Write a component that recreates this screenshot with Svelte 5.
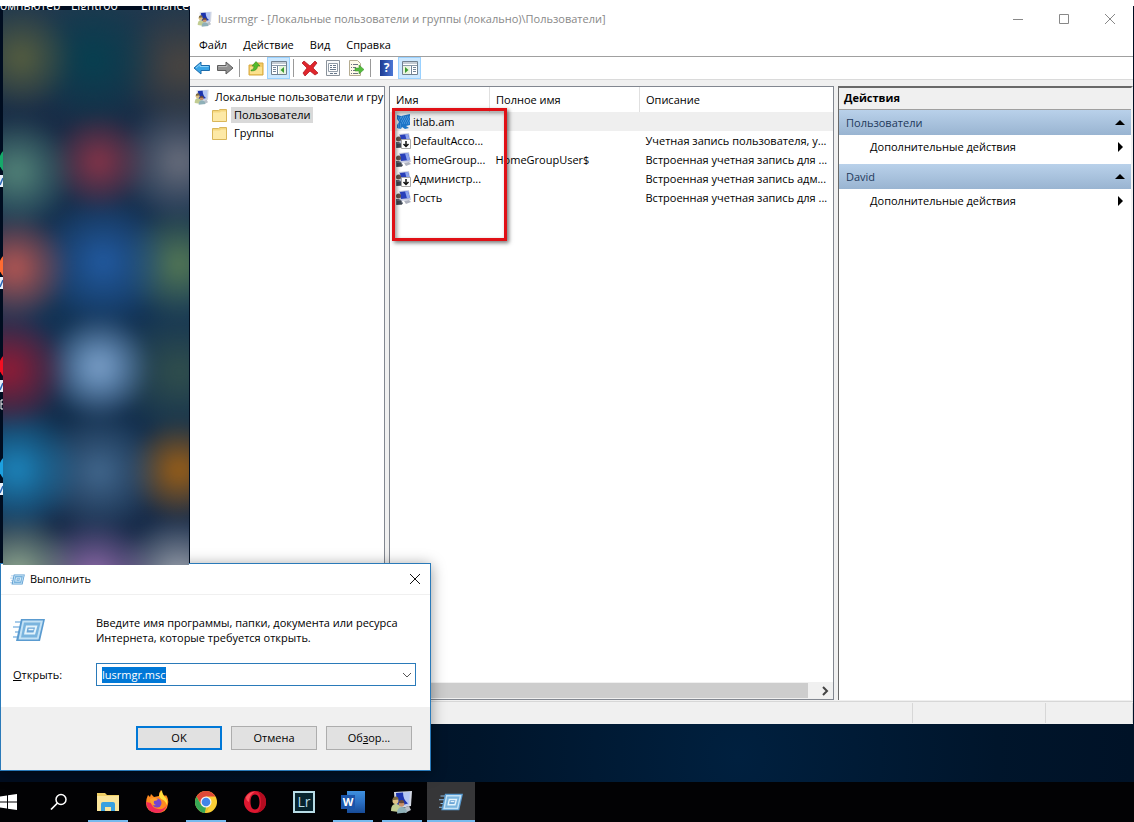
<script lang="ts">
	import { onMount } from 'svelte';

	interface User { name: string; full: string; about: string; state: string; }

	const menus = ['Файл', 'Действие', 'Вид', 'Справка'];

	const users: User[] = [
		{ name: 'itlab.am', full: '', about: '', state: 'selected' },
		{ name: 'DefaultAcco...', full: '', about: 'Учетная запись пользователя, у...', state: 'disabled' },
		{ name: 'HomeGroup...', full: 'HomeGroupUser$', about: 'Встроенная учетная запись для ...', state: '' },
		{ name: 'Администр...', full: '', about: 'Встроенная учетная запись адм...', state: 'disabled' },
		{ name: 'Гость', full: '', about: 'Встроенная учетная запись для ...', state: '' }
	];

	const sections = ['Пользователи', 'David'];

	const apps = [
		{ id: 'explorer', label: 'Проводник', open: true },
		{ id: 'firefox', label: 'Firefox', open: false },
		{ id: 'chrome', label: 'Chrome', open: true },
		{ id: 'opera', label: 'Opera', open: false },
		{ id: 'lightroom', label: 'Lightroom', open: false },
		{ id: 'word', label: 'Word', open: true },
		{ id: 'users', label: 'lusrmgr', open: true },
		{ id: 'run', label: 'Выполнить', open: true }
	];

	let command = $state('lusrmgr.msc');
	let inputEl: HTMLInputElement;

	onMount(() => {
		inputEl.focus();
		inputEl.select();
	});
</script>

{#snippet usersIcon(size: number)}
	<svg viewBox="0 0 24 24" width={size} height={size} aria-hidden="true">
		<path d="M4 2l18-1-1 15-16 3z" fill="#d3d8e4" />
		<path d="M6 3l14-1-1 13-12 2z" fill="#b4c6f4" />
		<path d="M6 3l7-.5q0 7 5 11l-11 3z" fill="#1c33ae" />
		<path d="M13 18l6-2 2 4-6 3z" fill="#b9bfc8" />
		<circle cx="5.500" cy="11" r="3" fill="#dcc083" />
		<path d="M2.500 10q0-3 3-3.500 3 0 3 3l-4 .5z" fill="#7d6a40" />
		<path d="M1 21q0-7 4.500-7t5 4l-2 4z" fill="#c1cc92" />
		<circle cx="11.500" cy="14" r="2.800" fill="#c99168" />
		<path d="M8.700 13q0-3 3-3 2.500 0 2.500 3l-3 .3z" fill="#66483a" />
		<path d="M7 23.500q0-6 4.500-6.500 5 0 5.500 5.500z" fill="#8fb0b8" />
	</svg>
{/snippet}

{#snippet userIcon(state: string)}
	<svg viewBox="0 0 15 16" width="15" height="16" aria-hidden="true">
		{#if state === 'selected'}
			<path d="M1 1l4 1 9-2v11l-4 1 3 2-4 1-3-2-1 2-4-1v-3l2-3-2-3z" fill="#1c75c8" />
			<path d="M5 3h9M6 5h8M5 7h9M6 9h8M2 4h3M3 6h2M2 10h3M2 12h3M2 14h3" stroke="#65aae8" stroke-dasharray="1 1" />
		{:else}
			<path d="M3 1l10-1 2 10-11 1z" fill="#c8cce0" />
			<path d="M4 2l8-1 2 7-9 1z" fill="#2940ba" />
			<path d="M9 1.300l3-.3 2 7-3 .4z" fill="#8da4ed" />
			<path d="M8 11l5-1 2 2-5 2z" fill="#aeb2bf" />
			<circle cx="2.500" cy="6" r="2.500" fill="#62564c" />
			<path d="M0 15V9h3q3 1 4 5z" fill="#5d6674" />
			<path d="M1 12h4M1 14h5" stroke="#252a32" />
			{#if state === 'disabled'}
				<path d="M5.500 6.500h9v9h-9z" fill="#fff" stroke="#aaa" />
				<path d="M10 8v5M7.500 11l2.500 2.500 2.500-2.500" fill="none" stroke="#111" stroke-width="1.500" />
			{/if}
		{/if}
	</svg>
{/snippet}

{#snippet runIcon(width: number, height: number)}
	<svg viewBox="0 0 32 24" {width} {height} aria-hidden="true">
		<path d="M2 4h7M0 9h7M2 14h4M0 19h4" stroke="#8cbce4" stroke-width="1.500" />
		<path d="M8 1h24l-5 22H3z" fill="#5a9bd0" />
		<path d="M9.500 2.500h20.500l-4.500 19H5.500z" fill="#c4e2f5" />
		<path d="M11 4.500h16.500l-3.500 15H8z" fill="#7ab4de" />
		<path d="M13 7.500h11.500l-2.500 9H11z" fill="#e3f3fb" />
		<path d="M14.500 9.500h7.500l-1.500 5h-7z" fill="#6ba5d6" />
		<path d="M15.500 11.500h5" stroke="#e9f6fd" stroke-width="1.500" />
	</svg>
{/snippet}

{#snippet folderIcon()}
	<svg viewBox="0 0 15 13" width="15" height="13" aria-hidden="true">
		<path d="M.5 1.500h6l1.500-1h6.500v12H.5z" fill="#f5d77e" stroke="#d9b65a" />
		<path d="M1 3.500h7l1-1h5V12H1z" fill="#fde9a6" />
	</svg>
{/snippet}

{#snippet appIcon(id: string)}
	{#if id === 'explorer'}
		<svg viewBox="0 0 22 20" width="22" height="20" aria-hidden="true">
			<path d="M0 1h8l2 2h12v16H0z" fill="#f0cf65" />
			<path d="M0 4h22v15H0z" fill="#fbe59b" />
			<path d="M4 19v-7q0-2 2-2h10q2 0 2 2v7h-4v-4H8v4z" fill="#39a1df" />
		</svg>
	{:else if id === 'firefox'}
		<svg viewBox="0 0 24 24" width="24" height="24" aria-hidden="true">
			<path d="M3 5l2 2 1-3 3 3 5-1q0-4 2-6 1 4 4 6l1-1q3 4 2 9-1 9-11 9Q1 22 1 13q0-4 2-8z" fill="#ff8a20" />
			<path d="M1 12q1 11 11 11 8-1 10-8-3 5-9 4-6-1-7-6z" fill="#f22b58" />
			<path d="M14 6q1-4 3-6 0 5 4 8 2 3 1 7-2-5-6-6z" fill="#ffdf3c" />
			<circle cx="12" cy="13" r="4.500" fill="#7644cf" />
			<path d="M5 9q4-2 8 0-1 2-4 2-1 3 2 4-6 1-6-6z" fill="#ffa12e" />
		</svg>
	{:else if id === 'chrome'}
		<svg viewBox="0 0 24 24" width="24" height="24" aria-hidden="true">
			<circle cx="12" cy="12" r="11" fill="#fbcf35" />
			<path d="M2.500 6.500A11 11 0 0 1 21.500 6.500H12L7.500 15z" fill="#df4938" />
			<path d="M2.500 6.500l5 9L12 17l-1 6A11 11 0 0 1 2.500 6.500z" fill="#36a756" />
			<path d="M16.500 15l-4.500 8-1-.1 2-6z" fill="#e8bd2c" />
			<circle cx="12" cy="12" r="5.500" fill="#f4f4f4" />
			<circle cx="12" cy="12" r="4.300" fill="#4285e8" />
		</svg>
	{:else if id === 'opera'}
		<svg viewBox="0 0 24 24" width="24" height="24" aria-hidden="true">
			<path fill-rule="evenodd" d="M12 1a11 11 0 1 0 0 22 11 11 0 0 0 0-22zm0 3.500c3 0 4.500 3 4.500 7.500s-1.500 7.500-4.500 7.500S7.500 16.500 7.500 12 9 4.500 12 4.500z" fill="#dd1730" />
			<path fill-rule="evenodd" d="M14 1.300Q23 3 23 12T14 22.700q4-3 4-10.700T14 1.300z" fill="#b30c20" />
			<path d="M3 7Q6 2 12 1.500 6 5 6 12q-3-1-3-5z" fill="#fa4d57" />
		</svg>
	{:else if id === 'lightroom'}
		<span class="lr" aria-hidden="true">Lr</span>
	{:else if id === 'word'}
		<span class="word" aria-hidden="true"><span class="word-tile">W</span></span>
	{:else if id === 'users'}
		{@render usersIcon(24)}
	{:else}
		{@render runIcon(24, 18)}
	{/if}
{/snippet}

<div class="desktop">
	<div class="top-strip"></div>

	<div class="shortcuts">
		<span>омпьютер</span>
		<span>Lightroo</span>
		<span>Enhancer</span>
	</div>

	<svg class="edge" viewBox="0 0 4 555" width="4" height="555" aria-hidden="true">
		<circle cx="13" cy="151" r="14" fill="#16a96a" />
		<circle cx="13" cy="256" r="14" fill="#ff6b32" />
		<circle cx="13" cy="356" r="14" fill="#f20f22" />
		<circle cx="13" cy="458" r="14" fill="#1ca0e0" />
		<path d="M0 165h4v12H0zM0 267h4v12H0zM0 370h4v12H0zM0 473h4v12H0z" fill="#e8f1fa" />
		<path d="M0 175l3-7M0 277l3-7M0 380l3-7M0 483l3-7" stroke="#2b67b8" stroke-width="1.500" />
		<path d="M3 390H1v9h2M1 394h2" fill="none" stroke="#fff" />
	</svg>
	<div class="blurred"></div>

	<main class="window">
		<header class="title-bar">
			{@render usersIcon(16)}
			<h1>lusrmgr - [Локальные пользователи и группы (локально)\Пользователи]</h1>
			<button class="win-btn" aria-label="Свернуть">
				<svg viewBox="0 0 12 12" width="12" height="12"><path d="M1 6.500h10" stroke="#888" /></svg>
			</button>
			<button class="win-btn" aria-label="Развернуть">
				<svg viewBox="0 0 12 12" width="12" height="12"><path d="M1.500 1.500h9v9h-9z" fill="none" stroke="#888" /></svg>
			</button>
			<button class="win-btn" aria-label="Закрыть">
				<svg viewBox="0 0 12 12" width="12" height="12"><path d="M1 1l10 10M11 1L1 11" stroke="#888" /></svg>
			</button>
		</header>

		<nav class="menu">
			{#each menus as m}
				<button>{m}</button>
			{/each}
		</nav>

		<div class="toolbar">
			<button class="tb" aria-label="Назад">
				<svg viewBox="0 0 18 16" width="18" height="16"><path d="M1 8l7-6v3.500h8.500v5H8V14z" fill="#3ba5e6" stroke="#1b6bab" /><path d="M3 8l4-3.500v2h8.500" fill="none" stroke="#8bd2fa" /></svg>
			</button>
			<button class="tb" aria-label="Вперед">
				<svg viewBox="0 0 18 16" width="18" height="16"><path d="M17 8l-7-6v3.500H1.500v5H10V14z" fill="#929292" stroke="#5d5d5d" /><path d="M2.500 6.500H11v-2" fill="none" stroke="#bbb" /></svg>
			</button>
			<span class="sep"></span>
			<button class="tb" aria-label="Вверх">
				<svg viewBox="0 0 16 16" width="16" height="16"><path d="M1 5h5l1-2h8v12H1z" fill="#f2cb67" stroke="#d6a83d" /><path d="M2 7h12v7H2z" fill="#fbe18e" /><path d="M3 10q3 0 3-4H4l4-4.500L12 6H9.500q0 5-6.500 5z" fill="#54bb2c" stroke="#33851c" stroke-width=".5" /></svg>
			</button>
			<button class="tb on" aria-label="Дерево консоли">
				<svg viewBox="0 0 16 14" width="16" height="14"><path d="M.5.5h15v13H.5z" fill="#fff" stroke="#71808f" /><path d="M1 2h14M1 4.500h14" stroke="#8b9aaa" /><path d="M6.500 5v8M2 6.500h3M2 8.500h3M2 10.500h3" stroke="#74869a" /><path d="M8 5h7v8H8z" fill="#e9f4df" /><path d="M13 6v6L9.500 9z" fill="#3b9c30" /></svg>
			</button>
			<span class="sep"></span>
			<button class="tb" aria-label="Удалить">
				<svg viewBox="0 0 16 16" width="16" height="16"><path d="M2 1l6 5 5-5 2 2-4 5 5 5-3 2-5-4-5 5-2-3 4-5-5-5z" fill="#e0262c" stroke="#a90f18" stroke-width=".7" /></svg>
			</button>
			<button class="tb" aria-label="Свойства">
				<svg viewBox="0 0 16 16" width="16" height="16"><path d="M1.500.5h13v15h-13z" fill="#f9fafb" stroke="#8a929b" /><path d="M3.500 3.500h9v8h-9z" fill="#fff" stroke="#919ca8" /><path d="M5 5.500h2M8 5.500h3M5 7.500h2M8 7.500h3M5 9.500h6M5 13.500h3M9 13.500h3" stroke="#68788b" /></svg>
			</button>
			<button class="tb" aria-label="Экспортировать список">
				<svg viewBox="0 0 16 16" width="16" height="16"><path d="M1.500.5h8l3 3v12h-11z" fill="#fffbe9" stroke="#b5ac91" /><path d="M3 4.500h1M5 4.500h5M3 7.500h1M5 7.500h3M3 10.500h1M5 10.500h2M3 13.500h1M5 13.500h5" stroke="#6e7381" /><path d="M7 8h4V5l5 4.500-5 4.500v-3H7z" fill="#55bd3e" stroke="#398d29" stroke-width=".5" /></svg>
			</button>
			<span class="sep"></span>
			<button class="tb" aria-label="Справка">
				<span class="help">?</span>
			</button>
			<button class="tb on" aria-label="Область действий">
				<svg viewBox="0 0 16 14" width="16" height="14"><path d="M.5.5h15v13H.5z" fill="#fff" stroke="#71808f" /><path d="M1 2h14M1 4.500h14" stroke="#8b9aaa" /><path d="M9.500 5v8M11 6.500h3M11 8.500h3M11 10.500h3" stroke="#74869a" /><path d="M1 5h7v8H1z" fill="#e9f4df" /><path d="M3 6v6l3.500-3z" fill="#3b9c30" /></svg>
			</button>
		</div>

		<div class="panes">
			<section class="tree">
				<div class="node">{@render usersIcon(16)}<span>Локальные пользователи и гру</span></div>
				<div class="node child">{@render folderIcon()}<span class="picked">Пользователи</span></div>
				<div class="node child">{@render folderIcon()}<span>Группы</span></div>
			</section>

			<section class="list">
				<table>
					<thead>
						<tr><th class="c-name">Имя</th><th class="c-full">Полное имя</th><th>Описание</th></tr>
					</thead>
					<tbody>
						{#each users as u}
							<tr class:sel={u.state === 'selected'}>
								<td class="name"><div>{@render userIcon(u.state)}<span>{u.name}</span></div></td>
								<td>{u.full}</td>
								<td>{u.about}</td>
							</tr>
						{/each}
					</tbody>
				</table>
				<div class="mark"></div>
				<div class="hscroll">
					<div class="thumb"></div>
					<button aria-label="Прокрутить вправо">
						<svg viewBox="0 0 8 10" width="8" height="10"><path d="M2 1l4 4-4 4" fill="none" stroke="#444" stroke-width="2" /></svg>
					</button>
				</div>
			</section>

			<aside class="actions">
				<h2>Действия</h2>
				{#each sections as s}
					<button class="group">{s}<svg viewBox="0 0 10 5" width="10" height="5"><path d="M0 5l5-5 5 5z" /></svg></button>
					<button class="more">Дополнительные действия<svg viewBox="0 0 5 10" width="5" height="10"><path d="M0 0l5 5-5 5z" /></svg></button>
				{/each}
			</aside>
		</div>

		<footer class="status"><span></span><span></span><span></span></footer>
	</main>

	<form class="dialog" onsubmit={(e) => e.preventDefault()}>
		<header>
			{@render runIcon(15, 11)}
			<h2>Выполнить</h2>
			<button type="button" class="close" aria-label="Закрыть">
				<svg viewBox="0 0 12 12" width="12" height="12"><path d="M1 1l10 10M11 1L1 11" stroke="#111" /></svg>
			</button>
		</header>
		<div class="body">
			{@render runIcon(32, 24)}
			<p>Введите имя программы, папки, документа или ресурса Интернета, которые требуется открыть.</p>
			<label for="cmd"><u>О</u>ткрыть:</label>
			<div class="combo">
				<input id="cmd" type="text" bind:this={inputEl} bind:value={command} autocomplete="off" />
				<button type="button" aria-label="Показать список">
					<svg viewBox="0 0 10 6" width="10" height="6"><path d="M1 1l4 4 4-4" fill="none" stroke="#555" /></svg>
				</button>
			</div>
		</div>
		<div class="buttons">
			<button type="submit" class="ok">OK</button>
			<button type="button">Отмена</button>
			<button type="button">Об<u>з</u>ор...</button>
		</div>
	</form>

	<nav class="taskbar">
		<button class="start" aria-label="Пуск">
			<svg viewBox="0 0 17 16" width="17" height="16"><path d="M0 2.500l7-1v6H0zM8 1.300L17 0v7.500H8zM0 8.500h7v6l-7-1zM8 8.500h9V16l-9-1.300z" fill="#fff" /></svg>
		</button>
		<button aria-label="Поиск">
			<svg viewBox="0 0 18 18" width="18" height="18"><circle cx="11" cy="6.500" r="5" fill="none" stroke="#fff" stroke-width="1.500" /><path d="M7.500 10L1 16.500" stroke="#fff" stroke-width="1.700" /></svg>
		</button>
		{#each apps as app}
			<button class:open={app.open} class:active={app.id === 'run'} aria-label={app.label}>
				{@render appIcon(app.id)}
			</button>
		{/each}
	</nav>
</div>

<style>
	:global(body) { margin: 0; }

	.desktop {
		position: relative;
		display: flex;
		flex-direction: column;
		min-height: 100vh;
		overflow: hidden;
		background: radial-gradient(ellipse at 65% 92%, #00203f 0, #00152b 25%, #000d20 60%);
		color: #000;
		font-family: "Open Sans", "Noto Sans", sans-serif;
		font-size: 11px;
		line-height: 16px;
	}

	button, input {
		font: inherit;
		color: inherit;
		box-sizing: border-box;
	}

	button {
		padding: 0;
		border: 0;
		background: none;
	}

	h1, h2, p { margin: 0; font: inherit; }
	svg { display: block; flex: none; }

	.top-strip {
		height: 6px;
		background: #fff;
		z-index: 2;
	}

	.shortcuts {
		display: grid;
		grid-template-columns: 71px 70px 50px;
		height: 4px;
		width: 190px;
		overflow: hidden;
		color: #fff;
		font-size: 12px;
	}

	.shortcuts span { margin-top: -8px; }

	.edge {
		position: absolute;
		left: 0;
		top: 10px;
	}

	/* Smeared desktop icons */
	.blurred {
		position: absolute;
		left: 3px;
		top: 10px;
		z-index: 4;
		width: 186px;
		height: 555px;
		overflow: hidden;
		background: linear-gradient(#20384e, #172b46 22%, #123457 50%, #122d4b 78%, #192a48);
	}

	/* Bleeds 20px past the box so that the blur has no dark rim */
	.blurred::before {
		content: "";
		display: block;
		height: 595px;
		margin: -20px;
		filter: blur(8px);
		background:
			radial-gradient(circle at 38px 68px, #58603f 0, transparent 54px),
			radial-gradient(circle at 110px 70px, #064050 0, transparent 66px),
			radial-gradient(circle at 198px 76px, #4c4640 0, transparent 64px),
			radial-gradient(circle at 34px 182px, #55877a 0, transparent 58px),
			radial-gradient(circle at 116px 172px, #8c3448 0, transparent 50px),
			radial-gradient(circle at 196px 172px, #6c707e 0, transparent 62px),
			radial-gradient(circle at 32px 278px, #bd5852 0, transparent 56px),
			radial-gradient(circle at 120px 272px, #225ba2 0, transparent 66px),
			radial-gradient(circle at 196px 274px, #567b55 0, transparent 58px),
			radial-gradient(circle at 26px 380px, #981a34 0, transparent 60px),
			radial-gradient(circle at 116px 377px, #7ea2cb 0, #5f85ae 18px, transparent 54px),
			radial-gradient(circle at 196px 382px, #32504c 0, transparent 66px),
			radial-gradient(circle at 34px 480px, #1d88c0 0, transparent 64px),
			radial-gradient(circle at 116px 482px, #43698f 0, transparent 62px),
			radial-gradient(circle at 196px 480px, #a36214 0, transparent 52px),
			radial-gradient(circle at 35px 585px, #99b295 0, transparent 62px),
			radial-gradient(circle at 112px 590px, #9c72b4 0, transparent 62px),
			radial-gradient(circle at 196px 590px, #a9afb8 0, transparent 64px);
	}

	/* Console window */
	.window {
		position: absolute;
		top: 6px;
		right: 1px;
		bottom: 98px;
		left: 190px;
		display: flex;
		flex-direction: column;
		background: #f0f0f0;
	}

	.title-bar {
		display: flex;
		align-items: center;
		height: 26px;
		padding-left: 7px;
		background: #fff;
		color: #888;
	}

	.title-bar h1 {
		flex: 1;
		margin-left: 5px;
		white-space: nowrap;
	}

	.win-btn {
		display: grid;
		place-items: center;
		width: 46px;
		height: 26px;
	}

	.menu {
		display: flex;
		gap: 16px;
		height: 23px;
		padding: 1px 0 0 9px;
		background: #fff;
		border-bottom: 1px solid #a0a0a0;
	}

	.toolbar {
		display: flex;
		align-items: center;
		height: 22px;
		background: #fff;
		border-bottom: 1px solid #dadada;
	}

	.tb {
		display: grid;
		place-items: center;
		width: 23px;
		height: 22px;
	}

	.tb.on {
		background: #cce8ff;
		box-shadow: inset 0 0 0 1px #99d1ff;
	}

	.sep {
		width: 1px;
		height: 18px;
		margin: 0 4px 0 3px;
		background: #999;
	}

	.help {
		width: 13px;
		background: linear-gradient(90deg, #1c3a91, #4b77d5);
		color: #fff;
		font-size: 12px;
		font-weight: 700;
		text-align: center;
	}

	.panes {
		flex: 1;
		display: grid;
		grid-template-columns: 195px minmax(0, 1fr) 295px;
		column-gap: 4px;
		min-height: 0;
		padding-top: 6px;
		padding-bottom: 1px;
	}

	.tree {
		overflow: hidden;
		background: #fff;
		border: solid #828790;
		border-width: 1px 1px 1px 0;
		padding-top: 1px;
	}

	.node {
		display: flex;
		align-items: center;
		gap: 5px;
		height: 18px;
		padding-left: 4px;
		white-space: nowrap;
	}

	.node.child { gap: 4px; padding-left: 22px; }
	.node.child span { padding: 0 3px; }
	.node .picked { background: #d9d9d9; }

	.list {
		position: relative;
		display: flex;
		flex-direction: column;
		justify-content: space-between;
		background: #fff;
		border: 1px solid #828790;
	}

	table {
		width: 100%;
		table-layout: fixed;
		border-collapse: collapse;
	}

	th, td {
		height: 19px;
		padding: 0 0 0 6px;
		font-weight: 400;
		text-align: left;
		white-space: nowrap;
	}

	th {
		height: 25px;
		border-right: 1px solid #e0e0e0;
	}

	th:last-child { border-right: 0; }
	.c-name { width: 93px; }
	.c-full { width: 143px; }
	.name div { display: flex; align-items: center; gap: 2px; }
	.sel { background: #efefef; }

	.mark {
		position: absolute;
		top: 21px;
		left: 2px;
		width: 109px;
		height: 127px;
		border: 3px solid #e01016;
		box-shadow: 2px 2px 4px #0008, inset 2px 2px 4px #0006;
	}

	.hscroll {
		display: flex;
		height: 17px;
		background: #f0f0f0;
	}

	.thumb {
		flex: 1;
		margin: 1px 8px 1px 0;
		background: #cdcdcd;
	}

	.hscroll button {
		display: grid;
		place-items: center;
		width: 17px;
	}

	.actions {
		background: #fff;
		border-top: 2px solid #696969;
		border-left: 1px solid #696969;
		border-right: 2px solid #f0f0f0;
	}

	.actions h2 {
		height: 21px;
		padding-left: 5px;
		background: #f0f0f0;
		border-bottom: 1px solid #a0a0a0;
		font-weight: 700;
		line-height: 20px;
	}

	.group, .more {
		display: flex;
		align-items: center;
		justify-content: space-between;
		width: 100%;
		padding: 0 8px 0 7px;
	}

	.group {
		height: 25px;
		padding-right: 6px;
		background: linear-gradient(#b9d1ea, #99b4d1);
		color: #1e395b;
	}

	.group svg { fill: #000; }
	.more { height: 24px; margin-bottom: 5px; padding-left: 31px; }

	.status {
		display: grid;
		grid-template-columns: 1fr 133px 87px;
		height: 22px;
		border-top: 1px solid #d7d7d7;
	}

	.status span {
		margin: 1px 0;
		border-right: 1px solid #d7d7d7;
	}

	/* Run dialog */
	.dialog {
		position: absolute;
		left: 0;
		bottom: 51px;
		z-index: 3;
		width: 429px;
		background: #fff;
		border: 1px solid #2a7ab9;
		box-shadow: 0 2px 14px #0006;
	}

	.dialog header {
		display: flex;
		align-items: center;
		height: 30px;
		padding-left: 9px;
		border-bottom: 1px solid #f0f0f0;
	}

	.dialog header h2 {
		flex: 1;
		margin-left: 5px;
	}

	.close {
		display: grid;
		place-items: center;
		width: 30px;
		height: 30px;
	}

	.body {
		display: grid;
		grid-template-columns: 83px 1fr;
		align-items: center;
		row-gap: 18px;
		padding: 20px 14px 21px 12px;
	}

	.body p { line-height: 15px; }

	.combo {
		display: flex;
		height: 23px;
		box-sizing: border-box;
		border: 1px solid #2a7ab9;
	}

	.combo input {
		flex: 1;
		min-width: 0;
		padding: 0 5px;
		border: 0;
		outline: 0;
	}

	.combo input::selection {
		background: #0078d7;
		color: #fff;
	}

	.combo button {
		display: grid;
		place-items: center;
		width: 17px;
	}

	.buttons {
		display: flex;
		justify-content: flex-end;
		gap: 9px;
		padding: 19px 18px 20px;
		background: #f0f0f0;
	}

	.buttons button {
		width: 86px;
		height: 24px;
		background: #e1e1e1;
		border: 1px solid #adadad;
	}

	.buttons .ok { border: 2px solid #0078d7; }

	/* Taskbar */
	.taskbar {
		display: flex;
		gap: 1px;
		height: 40px;
		margin-top: auto;
		background: #020204;
	}

	.taskbar button {
		display: grid;
		place-items: center;
		width: 48px;
		box-sizing: border-box;
	}

	.taskbar .start {
		width: 34px;
		justify-items: start;
	}

	.taskbar .open {
		background: linear-gradient(#76b9ed, #76b9ed) center bottom / 40px 2px no-repeat;
	}

	.taskbar .active {
		background-color: #363638;
		background-size: 48px 2px;
	}

	.lr {
		width: 18px;
		height: 18px;
		border: 2px solid #b8dce6;
		background: #07242e;
		color: #b8dce6;
		font-size: 14px;
		line-height: 17px;
		text-align: center;
	}

	.word {
		display: flex;
		align-items: center;
		width: 24px;
		height: 22px;
		background: linear-gradient(#3f91df, #2b70c4 50%, #174b97 100%) right / 18px 22px no-repeat;
	}

	.word-tile {
		width: 14px;
		height: 14px;
		background: #1b55aa;
		color: #fff;
		font-weight: 700;
		line-height: 14px;
		text-align: center;
	}
</style>
